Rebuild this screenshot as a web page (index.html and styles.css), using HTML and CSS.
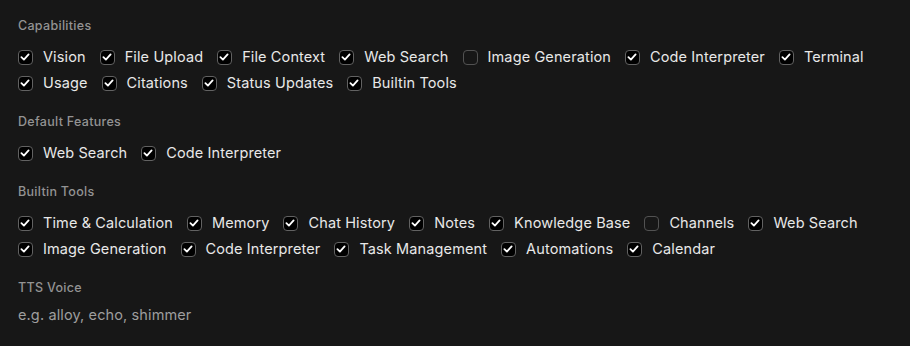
FILE: index.html
```html
<!DOCTYPE html>
<html lang="en">
<head>
<meta charset="utf-8">
<link rel="stylesheet" href="styles.css">
</head>
<body>
<div class="panel">
  <section class="section">
    <div class="heading">Capabilities</div>
    <div class="options">
      <label class="option"><span class="box checked"><svg viewBox="0 0 12 12"><path d="M2.4 6.2 L4.9 8.6 L9.6 3.4"/></svg></span><span class="text">Vision</span></label>
      <label class="option"><span class="box checked"><svg viewBox="0 0 12 12"><path d="M2.4 6.2 L4.9 8.6 L9.6 3.4"/></svg></span><span class="text">File Upload</span></label>
      <label class="option"><span class="box checked"><svg viewBox="0 0 12 12"><path d="M2.4 6.2 L4.9 8.6 L9.6 3.4"/></svg></span><span class="text">File Context</span></label>
      <label class="option"><span class="box checked"><svg viewBox="0 0 12 12"><path d="M2.4 6.2 L4.9 8.6 L9.6 3.4"/></svg></span><span class="text">Web Search</span></label>
      <label class="option"><span class="box"></span><span class="text">Image Generation</span></label>
      <label class="option"><span class="box checked"><svg viewBox="0 0 12 12"><path d="M2.4 6.2 L4.9 8.6 L9.6 3.4"/></svg></span><span class="text">Code Interpreter</span></label>
      <label class="option"><span class="box checked"><svg viewBox="0 0 12 12"><path d="M2.4 6.2 L4.9 8.6 L9.6 3.4"/></svg></span><span class="text">Terminal</span></label>
      <label class="option"><span class="box checked"><svg viewBox="0 0 12 12"><path d="M2.4 6.2 L4.9 8.6 L9.6 3.4"/></svg></span><span class="text">Usage</span></label>
      <label class="option"><span class="box checked"><svg viewBox="0 0 12 12"><path d="M2.4 6.2 L4.9 8.6 L9.6 3.4"/></svg></span><span class="text">Citations</span></label>
      <label class="option"><span class="box checked"><svg viewBox="0 0 12 12"><path d="M2.4 6.2 L4.9 8.6 L9.6 3.4"/></svg></span><span class="text">Status Updates</span></label>
      <label class="option"><span class="box checked"><svg viewBox="0 0 12 12"><path d="M2.4 6.2 L4.9 8.6 L9.6 3.4"/></svg></span><span class="text">Builtin Tools</span></label>
    </div>
  </section>
  <section class="section">
    <div class="heading">Default Features</div>
    <div class="options">
      <label class="option"><span class="box checked"><svg viewBox="0 0 12 12"><path d="M2.4 6.2 L4.9 8.6 L9.6 3.4"/></svg></span><span class="text">Web Search</span></label>
      <label class="option"><span class="box checked"><svg viewBox="0 0 12 12"><path d="M2.4 6.2 L4.9 8.6 L9.6 3.4"/></svg></span><span class="text">Code Interpreter</span></label>
    </div>
  </section>
  <section class="section">
    <div class="heading">Builtin Tools</div>
    <div class="options">
      <label class="option"><span class="box checked"><svg viewBox="0 0 12 12"><path d="M2.4 6.2 L4.9 8.6 L9.6 3.4"/></svg></span><span class="text">Time &amp; Calculation</span></label>
      <label class="option"><span class="box checked"><svg viewBox="0 0 12 12"><path d="M2.4 6.2 L4.9 8.6 L9.6 3.4"/></svg></span><span class="text">Memory</span></label>
      <label class="option"><span class="box checked"><svg viewBox="0 0 12 12"><path d="M2.4 6.2 L4.9 8.6 L9.6 3.4"/></svg></span><span class="text">Chat History</span></label>
      <label class="option"><span class="box checked"><svg viewBox="0 0 12 12"><path d="M2.4 6.2 L4.9 8.6 L9.6 3.4"/></svg></span><span class="text">Notes</span></label>
      <label class="option"><span class="box checked"><svg viewBox="0 0 12 12"><path d="M2.4 6.2 L4.9 8.6 L9.6 3.4"/></svg></span><span class="text">Knowledge Base</span></label>
      <label class="option"><span class="box"></span><span class="text">Channels</span></label>
      <label class="option"><span class="box checked"><svg viewBox="0 0 12 12"><path d="M2.4 6.2 L4.9 8.6 L9.6 3.4"/></svg></span><span class="text">Web Search</span></label>
      <label class="option"><span class="box checked"><svg viewBox="0 0 12 12"><path d="M2.4 6.2 L4.9 8.6 L9.6 3.4"/></svg></span><span class="text">Image Generation</span></label>
      <label class="option"><span class="box checked"><svg viewBox="0 0 12 12"><path d="M2.4 6.2 L4.9 8.6 L9.6 3.4"/></svg></span><span class="text">Code Interpreter</span></label>
      <label class="option"><span class="box checked"><svg viewBox="0 0 12 12"><path d="M2.4 6.2 L4.9 8.6 L9.6 3.4"/></svg></span><span class="text">Task Management</span></label>
      <label class="option"><span class="box checked"><svg viewBox="0 0 12 12"><path d="M2.4 6.2 L4.9 8.6 L9.6 3.4"/></svg></span><span class="text">Automations</span></label>
      <label class="option"><span class="box checked"><svg viewBox="0 0 12 12"><path d="M2.4 6.2 L4.9 8.6 L9.6 3.4"/></svg></span><span class="text">Calendar</span></label>
    </div>
  </section>
  <section class="section last">
    <div class="heading">TTS Voice</div>
    <input class="voice" type="text" placeholder="e.g. alloy, echo, shimmer">
  </section>
</div>
</body>
</html>
```

FILE: styles.css
```css
* { box-sizing: border-box; }
html, body {
  margin: 0;
  background: #171717;
}
body {
  font-family: Inter, "Noto Sans", sans-serif;
  color: #e8e8e8;
  width: 910px;
  height: 346px;
  overflow: hidden;
}
.panel {
  padding: 17px 18px 0 18px;
}
.section {
  margin-bottom: 20px;
}
.heading {
  font-size: 12.5px;
  line-height: 16px;
  padding-top: 1px;
  font-weight: 500;
  letter-spacing: 0.3px;
  color: #939393;
  margin-bottom: 13px;
}
.section.last .heading {
  margin-bottom: 9px;
}
.options {
  display: flex;
  flex-wrap: wrap;
  row-gap: 6px;
  width: 874px;
}
.option {
  display: flex;
  align-items: center;
  height: 20px;
  margin-right: 14px;
  font-size: 14.5px;
  line-height: 20px;
  letter-spacing: 0.12px;
}
.box {
  width: 15px;
  height: 15px;
  border: 1.5px solid #525252;
  border-radius: 4px;
  margin-right: 10px;
  flex: none;
  display: flex;
}
.box.checked {
  background: #000;
  border-color: #626262;
}
.box svg {
  width: 12px;
  height: 12px;
  fill: none;
  stroke: #fff;
  stroke-width: 1.8;
  stroke-linecap: round;
  stroke-linejoin: round;
}
.text {
  white-space: nowrap;
}
.voice {
  display: block;
  width: 874px;
  border: 0;
  outline: 0;
  padding: 0;
  margin: 0;
  background: transparent;
  font-family: Inter, "Noto Sans", sans-serif;
  font-size: 14.5px;
  letter-spacing: 0.12px;
  line-height: 20px;
  height: 20px;
  color: #e8e8e8;
}
.voice::placeholder {
  color: #9e9e9e;
}
```
